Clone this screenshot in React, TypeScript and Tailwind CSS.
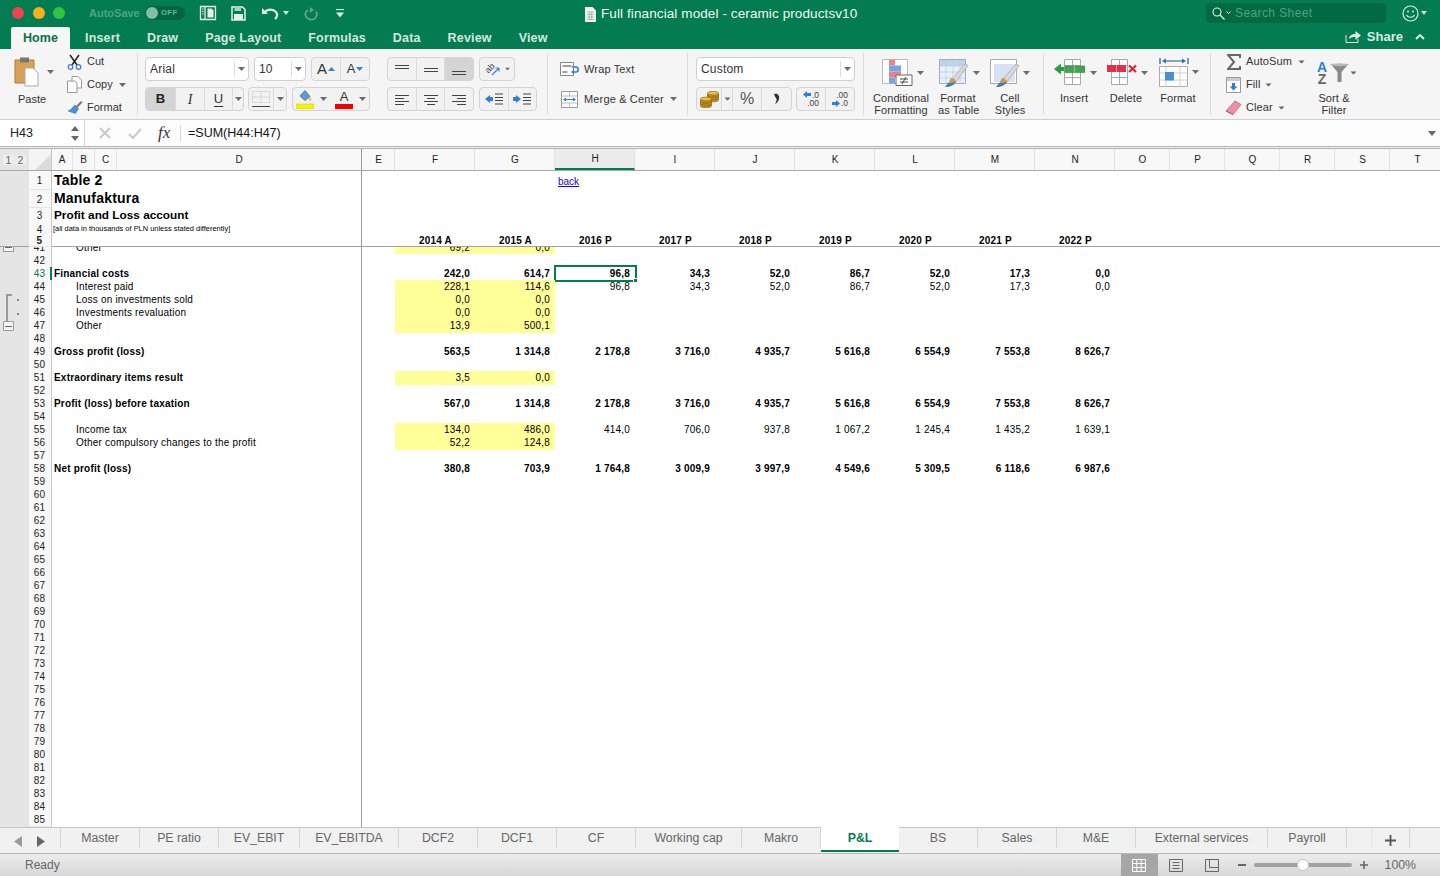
import React from 'react';

const UI = "font-['Liberation_Sans',Arial,sans-serif]";

const Caret = ({ className = '' }: { className?: string }) => (
  <svg width="7" height="4" viewBox="0 0 7 4" className={`shrink-0 ${className}`}>
    <path d="M0 0h7L3.500 4z" fill="#6b6b6b" />
  </svg>
);

const TitleTab = ({ label }: { label: string }) => (
  <div className="px-[13.5px] text-[12.5px] tracking-[0.16px] font-bold text-[#d5e8df] leading-[22px]">{label}</div>
);

const TitleBar = () => (
  <div className="h-[49px] bg-[#027c50] flex flex-col shrink-0">
    <div className="h-[26px] flex items-center relative">
      <div className="flex items-center pl-[12px] gap-[8.5px]">
        <div className="w-[12px] h-[12px] rounded-full bg-[#f0444a]" />
        <div className="w-[12px] h-[12px] rounded-full bg-[#f5b020]" />
        <div className="w-[12px] h-[12px] rounded-full bg-[#2fc645]" />
      </div>
      <div className="ml-[24px] text-[11px] font-bold text-[#4da584] w-[56px]">AutoSave</div>
      <div className="w-[40px] h-[14px] rounded-full bg-[#01653f] flex items-center pl-[1px]">
        <div className="w-[12px] h-[12px] rounded-full bg-[#7fbfa6]" />
        <span className="ml-[3px] text-[7.5px] font-bold text-[#6fb59a] tracking-[0.5px]">OFF</span>
      </div>
      <svg width="18" height="16" viewBox="0 0 18 16" className="ml-[14px]">
        <path d="M1.500 1.500h15v13h-15z M6 1.500v13" fill="none" stroke="#e4f1eb" strokeWidth="1.300" />
        <path d="M8.500 3.500h4l2 2v7h-6z" fill="#e4f1eb" />
        <path d="M3 4h1.500M3 6.500h1.500M3 9h1.500" stroke="#e4f1eb" />
      </svg>
      <svg width="15" height="15" viewBox="0 0 15 15" className="ml-[14px]">
        <path d="M1 1h10.500L14 3.500V14H1z" fill="none" stroke="#e4f1eb" strokeWidth="1.500" />
        <path d="M3.500 1.500h6.500v3.500H3.500z" fill="#a9d3c1" />
        <path d="M3 8h9v6H3z" fill="#e4f1eb" />
      </svg>
      <svg width="18" height="13" viewBox="0 0 18 13" className="ml-[15px]">
        <path d="M1 1v6h6z" fill="#e4f1eb" />
        <path d="M3 5.500C6 2 12 1.500 15 5c2 2.400 1 5.500-1 7" fill="none" stroke="#e4f1eb" strokeWidth="2.200" />
      </svg>
      <svg width="6" height="4" viewBox="0 0 6 4" className="ml-[4px]"><path d="M0 0h6L3 4z" fill="#d5e8df" /></svg>
      <svg width="14" height="15" viewBox="0 0 14 15" className="ml-[15px]">
        <path d="M6 1l4 3-4 3z" fill="#5aa98a" />
        <path d="M4 4C1.500 5.500 1 8 1.500 9.500 2.500 13 7 14.500 10 13c3-1.500 3.500-5 2-7.500" fill="none" stroke="#5aa98a" strokeWidth="1.800" />
      </svg>
      <svg width="10" height="9" viewBox="0 0 10 9" className="ml-[17px]">
        <path d="M1 0.500h8" stroke="#e4f1eb" strokeWidth="1.200" />
        <path d="M1 3.500h8L5 8.500z" fill="#e4f1eb" />
      </svg>
      <div className="absolute left-[585px] top-[4px] flex items-center">
        <svg width="11" height="15" viewBox="0 0 11 15">
          <path d="M0 0h7.500L11 3.500V15H0z" fill="#f2f7f4" />
          <path d="M2 5h7M2 7.500h7M2 10h7M2 12.500h7M4.300 5v8M6.700 5v8" stroke="#7fae96" strokeWidth="0.700" />
        </svg>
        <span className="ml-[5px] text-[13.5px] text-[#f2f7f4] font-normal tracking-[0.1px]">Full financial model - ceramic productsv10</span>
      </div>
      <div className="ml-auto w-[180px] h-[20px] rounded-[3px] bg-[#016a43] flex items-center pl-[6px]">
        <svg width="13" height="13" viewBox="0 0 13 13">
          <circle cx="5" cy="5" r="4" fill="none" stroke="#e4f1eb" strokeWidth="1.100" />
          <path d="M8 8l4.500 4.500" stroke="#e4f1eb" strokeWidth="1.200" />
        </svg>
        <svg width="5" height="4" viewBox="0 0 5 4" className="ml-[1px]"><path d="M.500.500l2 2 2-2" fill="none" stroke="#e4f1eb" /></svg>
        <span className="ml-[4px] text-[12px] text-[#4fa282] tracking-[0.4px]">Search Sheet</span>
      </div>
      <div className="ml-[16px] mr-[13px] flex items-center">
        <svg width="17" height="17" viewBox="0 0 17 17">
          <circle cx="8.500" cy="8.500" r="7.500" fill="none" stroke="#d8ebe2" strokeWidth="1.200" />
          <circle cx="6" cy="6.500" r="1" fill="#d8ebe2" />
          <circle cx="11" cy="6.500" r="1" fill="#d8ebe2" />
          <path d="M4.500 10c1.500 3 6.500 3 8 0" fill="none" stroke="#d8ebe2" strokeWidth="1.200" />
        </svg>
        <svg width="6" height="4" viewBox="0 0 6 4" className="ml-[2px]"><path d="M0 0h6L3 4z" fill="#d5e8df" /></svg>
      </div>
    </div>
    <div className="flex-1 flex items-end pl-[11px] pr-[15px]">
      <div className="w-[59px] h-[22px] bg-[#f6f6f6] rounded-t-[2px] text-center text-[12.5px] tracking-[0.1px] font-bold leading-[22px] text-[#0a7049]">Home</div>
      <div className="flex pl-[1.500px]">
        {['Insert', 'Draw', 'Page Layout', 'Formulas', 'Data', 'Review', 'View'].map(t => (
          <TitleTab key={t} label={t} />
        ))}
      </div>
      <div className="ml-auto flex items-center h-[22px] pb-[3px]">
        <svg width="16" height="13" viewBox="0 0 16 13">
          <path d="M1 5v7.500h12V9" fill="none" stroke="#d8ebe2" />
          <path d="M4 9c0-3.500 3-5 6.500-5V1L16 5.500 10.500 10V7C7.500 7 5.500 7.500 4 9z" fill="#d8ebe2" />
        </svg>
        <span className="ml-[6px] text-[13px] font-bold text-[#d8ebe2]">Share</span>
        <svg width="10" height="6" viewBox="0 0 10 6" className="ml-[12px]"><path d="M1 5l4-4 4 4" fill="none" stroke="#e4f1eb" strokeWidth="1.800" /></svg>
      </div>
    </div>
  </div>
);

const Sep = () => <div className="w-px h-[62px] bg-[#dcdcdc] self-center shrink-0" />;

const BtnGroup = ({ children, className = '' }: { children: React.ReactNode; className?: string }) => (
  <div className={`flex rounded-[4px] border border-[#d4d4d4] bg-[#f2f2f2] overflow-hidden ${className}`}>{children}</div>
);

const Cell = ({ children, className = '' }: { children?: React.ReactNode; className?: string }) => (
  <div className={`flex items-center justify-center border-r border-[#dadada] last:border-r-0 ${className}`}>{children}</div>
);

const Combo = ({ label, className = '' }: { label: string; className?: string }) => (
  <div className={`h-[24px] rounded-[4px] border border-[#d0d0d0] bg-white flex items-center pl-[4px] text-[12px] text-[#333] tracking-[0.2px] ${className}`}>
    <span className="flex-1">{label}</span>
    <div className="w-[14px] h-[16px] border-l border-[#dedede] flex items-center justify-center">
      <Caret />
    </div>
  </div>
);

const Lines = ({ d }: { d: string }) => (
  <svg width="18" height="13" viewBox="0 0 18 13"><path d={d} stroke="#444" strokeWidth="1" fill="none" /></svg>
);

const Clipboard = () => (
  <div className="w-[137px] shrink-0 flex">
    <div className="w-[67px] flex flex-col pt-[7px]">
      <div className="flex items-center pl-[14px]">
        <svg width="26" height="31" viewBox="0 0 26 31">
          <path d="M1 4h19v23H1z" fill="#d9a05a" stroke="#b27a36" />
          <path d="M6 1.500h9v5H6z" fill="#777" />
          <path d="M11 12h8l5 5v13H11z" fill="#fff" stroke="#aaa" />
        </svg>
        <Caret className="ml-[7px]" />
      </div>
      <div className="mt-[4px] w-[64px] text-center text-[11px] text-[#333]">Paste</div>
    </div>
    <div className="flex flex-col pt-[3px] gap-[4px] text-[11px] text-[#333]">
      <div className="flex items-center h-[19px]">
        <svg width="15" height="16" viewBox="0 0 15 16" className="mr-[5px]">
          <path d="M3 1l7 10M12 1L5 11" stroke="#222" strokeWidth="1.500" />
          <circle cx="3.500" cy="13" r="2.300" fill="none" stroke="#3a7fd0" strokeWidth="1.200" />
          <circle cx="11.500" cy="13" r="2.300" fill="none" stroke="#3a7fd0" strokeWidth="1.200" />
        </svg>
        Cut
      </div>
      <div className="flex items-center h-[19px]">
        <svg width="15" height="17" viewBox="0 0 15 17" className="mr-[5px]">
          <path d="M5 .500h6l3.500 3.500v8H5z" fill="#fff" stroke="#999" />
          <path d="M.500 5H8l2 2v9.500H.500z" fill="#fff" stroke="#999" />
        </svg>
        Copy
        <Caret className="ml-[6px]" />
      </div>
      <div className="flex items-center h-[19px]">
        <svg width="16" height="15" viewBox="0 0 16 15" className="mr-[4px]">
          <path d="M9 6l5-5 1.500 1.500-5 5z" fill="#777" />
          <path d="M8 5l3.500 3.500-3 5L1 11c2-1 4-2 4-3z" fill="#4a90d9" stroke="#31659c" strokeWidth=".5" />
        </svg>
        Format
      </div>
    </div>
  </div>
);

const Font = () => (
  <div className="w-[249px] shrink-0 pl-[7px] pt-[8px] flex flex-col gap-[6px]">
    <div className="flex gap-[5px]">
      <Combo label="Arial" className="w-[104px]" />
      <Combo label="10" className="w-[52px]" />
      <BtnGroup className="w-[59px] h-[24px]">
        <Cell className="flex-1 text-[15px] text-[#333] gap-[1px]">A<svg width="7" height="4" viewBox="0 0 7 4"><path d="M0 4h7L3.500 0z" fill="#3a7fd0" /></svg></Cell>
        <Cell className="flex-1 text-[13px] text-[#333] gap-[1px]">A<svg width="7" height="4" viewBox="0 0 7 4"><path d="M0 0h7L3.500 4z" fill="#3a7fd0" /></svg></Cell>
      </BtnGroup>
    </div>
    <div className="flex items-stretch h-[24px]">
      <BtnGroup className="w-[99px]">
        <Cell className="w-[30px] bg-[#d4d4d4] font-bold text-[13px] text-[#222]">B</Cell>
        <Cell className="w-[29px] italic text-[14px] text-[#333] font-['Liberation_Serif',serif]">I</Cell>
        <Cell className="w-[28px] text-[13px] text-[#333]"><span className="border-b border-[#333] leading-[14px]">U</span></Cell>
        <Cell className="flex-1"><Caret /></Cell>
      </BtnGroup>
      <BtnGroup className="w-[39px] ml-[4px]">
        <Cell className="flex-1">
          <svg width="18" height="17" viewBox="0 0 18 17">
            <path d="M.500.500h17v11H.500zM9 .500v11M.500 6h17" fill="none" stroke="#c2c2c2" strokeDasharray="1 1" />
            <path d="M0 15.500h18" stroke="#444" strokeWidth="1" />
          </svg>
        </Cell>
        <Cell className="w-[12px]"><Caret /></Cell>
      </BtnGroup>
      <BtnGroup className="w-[78px] ml-[5px]">
        <Cell className="w-[38px] border-r-0 justify-start pl-[3px]">
          <svg width="18" height="20" viewBox="0 0 18 20" className="shrink-0">
            <path d="M4 7l5-5.500 5 6-5 4z" fill="#5f9bd8" stroke="#555" strokeWidth=".7" />
            <path d="M14 8l1.500 3-1.500 1-1-2z" fill="#e0b040" />
            <path d="M0 15h18v5H0z" fill="#f7f200" stroke="#c9c400" strokeWidth=".5" />
          </svg>
          <Caret className="ml-[6px]" />
        </Cell>
        <Cell className="flex-1 border-r-0 justify-start pl-[4px]">
          <div className="flex flex-col items-center shrink-0">
            <span className="text-[13px] leading-[14px] text-[#333]">A</span>
            <div className="w-[18px] h-[5px] bg-[#f30000]" />
          </div>
          <Caret className="ml-[6px]" />
        </Cell>
      </BtnGroup>
    </div>
  </div>
);

const Align = () => (
  <div className="w-[160px] shrink-0 pt-[8px] flex flex-col gap-[6px]">
    <div className="flex h-[24px]">
      <BtnGroup className="w-[87px]">
        <Cell className="flex-1"><Lines d="M2 2.500h14M2 5.500h14" /></Cell>
        <Cell className="flex-1"><Lines d="M2 5.500h14M2 8.500h14" /></Cell>
        <Cell className="flex-1 bg-[#d4d4d4]"><Lines d="M2 8.500h14M2 11.500h14" /></Cell>
      </BtnGroup>
      <BtnGroup className="w-[36px] ml-[5px]">
        <Cell className="flex-1 gap-[3px]">
          <div className="relative w-[17px] h-[15px] flex items-center justify-center">
            <span className="-rotate-45 text-[9px] leading-[9px] text-[#444] -translate-x-[2px] -translate-y-[1px]">ab</span>
            <svg width="17" height="15" viewBox="0 0 17 15" className="absolute inset-0">
              <path d="M8 13l7-7M15 6h-3.500M15 6v3.500" fill="none" stroke="#3a7fd0" strokeWidth="1.200" />
            </svg>
          </div>
          <Caret className="scale-75" />
        </Cell>
      </BtnGroup>
    </div>
    <div className="flex h-[24px]">
      <BtnGroup className="w-[87px]">
        <Cell className="flex-1"><Lines d="M2 2.500h14M2 5.500h9M2 8.500h14M2 11.500h9" /></Cell>
        <Cell className="flex-1"><Lines d="M2 2.500h14M5 5.500h8M2 8.500h14M5 11.500h8" /></Cell>
        <Cell className="flex-1"><Lines d="M2 2.500h14M7 5.500h9M2 8.500h14M7 11.500h9" /></Cell>
      </BtnGroup>
      <BtnGroup className="w-[58px] ml-[5px]">
        <Cell className="flex-1">
          <svg width="18" height="12" viewBox="0 0 18 12">
            <path d="M0 6l5-4v2h3v4H5v2z" fill="#2f7fd8" />
            <path d="M10 1h8M10 4.500h8M10 7.500h8M10 11h8" stroke="#444" />
          </svg>
        </Cell>
        <Cell className="flex-1">
          <svg width="18" height="12" viewBox="0 0 18 12">
            <path d="M8 6L3 2v2H0v4h3v2z" fill="#2f7fd8" />
            <path d="M10 1h8M10 4.500h8M10 7.500h8M10 11h8" stroke="#444" />
          </svg>
        </Cell>
      </BtnGroup>
    </div>
  </div>
);

const Wrap = () => (
  <div className="w-[139px] shrink-0 flex flex-col pl-[12px] pt-[10px] gap-[10px] text-[11px] text-[#333] tracking-[0.15px]">
    <div className="flex items-center h-[20px]">
      <svg width="20" height="14" viewBox="0 0 20 14" className="mr-[4px]">
        <path d="M.500.500h13v13H.500z" fill="#fff" stroke="#888" />
        <path d="M2.500 4h9M2.500 10h5" stroke="#444" />
        <path d="M12 5h4c3 0 3 5 0 5h-3" fill="none" stroke="#2f7fd8" strokeWidth="1.500" />
        <path d="M11 10l3-2.500v5z" fill="#2f7fd8" />
      </svg>
      Wrap Text
    </div>
    <div className="flex items-center h-[20px]">
      <svg width="18" height="17" viewBox="0 0 18 17" className="ml-px mr-[5px]">
        <path d="M.500.500h16v16H.500z" fill="#fff" stroke="#999" />
        <path d="M.500 5h16M.500 12h16M8.500 .500V5M8.500 12v5" stroke="#bbb" />
        <path d="M3 8.500h11" stroke="#2f7fd8" />
        <path d="M2 8.500l3-2v4zM15 8.500l-3-2v4z" fill="#2f7fd8" />
      </svg>
      Merge &amp; Center
      <Caret className="ml-[6px]" />
    </div>
  </div>
);

const coin = (cx: number, cy: number) => (
  <g key={`${cx}-${cy}`}>
    <path d={`M${cx - 5.500} ${cy}v2c0 2.400 11 2.400 11 0v-2z`} fill="#c98f1d" stroke="#7d5a12" strokeWidth=".6" />
    <ellipse cx={cx} cy={cy} rx="5.500" ry="1.900" fill="#edbd44" stroke="#7d5a12" strokeWidth=".6" />
  </g>
);

const NumberGroup = () => (
  <div className="w-[175px] shrink-0 pl-[8px] pt-[8px] flex flex-col gap-[6px]">
    <Combo label="Custom" className="w-[159px]" />
    <div className="flex h-[24px]">
      <BtnGroup className="w-[96px]">
        <Cell className="w-[25px]">
          <svg width="19" height="17" viewBox="0 0 19 17">
            {coin(13, 7)}
            {coin(13, 4.500)}
            {coin(13, 2.200)}
            {coin(6, 13)}
            {coin(6, 10.500)}
            {coin(6, 8)}
          </svg>
        </Cell>
        <Cell className="w-[11px]"><Caret className="scale-90" /></Cell>
        <Cell className="w-[29px] text-[16px] text-[#555]">%</Cell>
        <Cell className="flex-1">
          <svg width="8" height="12" viewBox="0 0 8 12"><path d="M1 1c3-1 6 1 5 5-.5 2.500-2 4-4 5 1-2 2-3.500 1.500-5C3 5 1.500 3 1 1z" fill="#333" /></svg>
        </Cell>
      </BtnGroup>
      <BtnGroup className="w-[59px] ml-[4px]">
        <Cell className="flex-1 text-[8.500px] leading-[8.500px] text-[#444]">
          <div className="flex flex-col items-end">
            <div className="flex items-center">
              <svg width="8" height="7" viewBox="0 0 8 7" className="mr-px"><path d="M0 3.500L4 0v2h4v3H4v2z" fill="#2f7fd8" /></svg>
              .0
            </div>
            <span>.00</span>
          </div>
        </Cell>
        <Cell className="flex-1 text-[8.500px] leading-[8.500px] text-[#444]">
          <div className="flex flex-col items-end">
            <span>.00</span>
            <div className="flex items-center">
              <svg width="8" height="7" viewBox="0 0 8 7" className="mr-px"><path d="M8 3.500L4 0v2H0v3h4v2z" fill="#2f7fd8" /></svg>
              .0
            </div>
          </div>
        </Cell>
      </BtnGroup>
    </div>
  </div>
);

const BigLabel = ({ lines, className = '' }: { lines: string[]; className?: string }) => (
  <div className={`text-center text-[11px] leading-[12px] text-[#333] tracking-[0.1px] whitespace-nowrap mt-[5px] ${className}`}>
    {lines.map(l => <div key={l}>{l}</div>)}
  </div>
);

const BrushOverlay = () => (
  <>
    <path d="M13 20L26 5l3 1.500L17 23z" fill="#d8d8d8" stroke="#999" strokeWidth=".6" />
    <path d="M12 19c3 0 5 2 5 4-2 4-7 5-11 5 3-2 4-6 6-9z" fill="#d69a45" />
    <path d="M9 24c3 0 6-.5 8-1-2 3.500-7 5-11 5 1-1 2-2.500 3-4z" fill="#2f7fd8" />
  </>
);

const Styles = () => (
  <div className="w-[179px] shrink-0 flex">
    <div className="w-[74px] shrink-0 flex flex-col pt-[9px]">
      <div className="flex items-center h-[29px] pl-[18px]">
        <svg width="31" height="27" viewBox="0 0 31 27">
          <path d="M.500.500h25v24H.500z" fill="#fff" stroke="#bbb" />
          <path d="M7 .500h6v6H7z" fill="#f0808a" />
          <path d="M7 6.500h12v6H7z" fill="#6fa8e8" />
          <path d="M7 12.500h12v6H7z" fill="#f0808a" />
          <path d="M7 18.500h6v6H7z" fill="#6fa8e8" />
          <path d="M14 16h16v10.500H14z" fill="#fff" stroke="#666" />
          <path d="M18 20h8M18 23h8M24 18l-4 7" stroke="#444" />
        </svg>
        <Caret className="ml-[4px]" />
      </div>
      <BigLabel lines={['Conditional', 'Formatting']} />
    </div>
    <div className="w-[40px] shrink-0 flex flex-col pt-[9px]">
      <div className="flex items-center h-[29px] pl-px w-max">
        <svg width="30" height="28" viewBox="0 0 30 28">
          <path d="M.500.500h26v24H.500z" fill="#fff" stroke="#aaa" />
          <path d="M1 1h25v6H1z" fill="#bcd4ee" />
          <path d="M1 7h25v17H1z" fill="#e6f0fa" />
          <path d="M.500 7h26M.500 13h26M.500 19h26M7 1v24M14 1v24M21 1v24" stroke="#b9cbdd" strokeWidth=".7" />
          <BrushOverlay />
        </svg>
        <Caret className="ml-[4px]" />
      </div>
      <BigLabel lines={['Format', 'as Table']} />
    </div>
    <div className="w-[64px] shrink-0 flex flex-col pt-[9px]">
      <div className="flex items-center h-[29px] pl-[12px]">
        <svg width="30" height="28" viewBox="0 0 30 28">
          <path d="M.500.500h26v24H.500z" fill="#fff" stroke="#aaa" />
          <path d="M4 5h21v18H4z" fill="#d5e3f4" />
          <BrushOverlay />
        </svg>
        <Caret className="ml-[3px]" />
      </div>
      <BigLabel lines={['Cell', 'Styles']} />
    </div>
  </div>
);

const CellsGroup = () => (
  <div className="w-[166px] shrink-0 flex">
    <div className="w-[60px] shrink-0 flex flex-col pt-[9px]">
      <div className="flex items-center h-[29px] pl-[10px]">
        <svg width="31" height="27" viewBox="0 0 31 27">
          <path d="M10.500 .500h16v25h-16zM10.500 6.500h16M10.500 18.500h16M18.500 .500v25" fill="#fff" stroke="#aaa" />
          <path d="M11 7h20v6.500H11z" fill="#44a551" stroke="#2f8a3d" strokeWidth=".6" />
          <path d="M20.500 7v6.500" stroke="#86c78f" />
          <path d="M0 10l7-5.500v11z" fill="#2f9a43" />
          <path d="M6 8h4v4H6z" fill="#2f9a43" />
        </svg>
        <Caret className="ml-[5px]" />
      </div>
      <BigLabel lines={['Insert']} />
    </div>
    <div className="w-[44px] shrink-0 flex flex-col pt-[9px]">
      <div className="flex items-center h-[29px] pl-[3px] w-max">
        <svg width="31" height="27" viewBox="0 0 31 27">
          <path d="M4.500 .500h16v25h-16zM4.500 6.500h16M4.500 18.500h16M12.500 .500v25" fill="#fff" stroke="#aaa" />
          <path d="M0 6h19v7H0z" fill="#e0304a" />
          <path d="M9.500 6v7" stroke="#f08a98" />
          <path d="M22 6.500l7 6.500M29 6.500l-7 6.500" stroke="#dd2030" strokeWidth="2.200" />
        </svg>
        <Caret className="ml-[3px]" />
      </div>
      <BigLabel lines={['Delete']} />
    </div>
    <div className="w-[60px] shrink-0 flex flex-col pt-[8px]">
      <div className="flex items-center h-[30px] pl-[11px]">
        <svg width="30" height="30" viewBox="0 0 30 30">
          <path d="M1 1v6M29 1v6" stroke="#2f6fc0" strokeWidth="1.400" />
          <path d="M6 4h18" stroke="#2f6fc0" strokeWidth="1.200" />
          <path d="M3 4l4-2.500v5zM27 4l-4-2.500v5z" fill="#2f6fc0" />
          <path d="M.500 9.500h28v20H.500z" fill="#fff" stroke="#aaa" />
          <path d="M.500 16h28M.500 23h28M7 9.500v20M21 9.500v20" stroke="#d0d0d0" />
          <path d="M6 15h9v8.500H6z" fill="#4a8ed8" />
        </svg>
        <Caret className="ml-[3px]" />
      </div>
      <BigLabel lines={['Format']} />
    </div>
  </div>
);

const Editing = () => (
  <div className="flex-1 flex pl-[15px] text-[11px] text-[#333] tracking-[0.1px]">
    <div className="w-[89px] flex flex-col pt-[4px] gap-[6px]">
      <div className="flex items-center h-[17px]">
        <svg width="14" height="16" viewBox="0 0 14 16" className="ml-[1px] mr-[5px]"><path d="M13 4V1H1l6 7-6 7h12v-3" fill="none" stroke="#666" strokeWidth="2" /></svg>
        AutoSum
        <Caret className="ml-[6px] scale-90" />
      </div>
      <div className="flex items-center h-[17px]">
        <svg width="15" height="16" viewBox="0 0 15 16" className="mr-[5px]">
          <path d="M.500.500h14v15H.500z" fill="#fff" stroke="#999" />
          <path d="M1 1h13v3H1z" fill="#ccc" />
          <path d="M6 6h3v3.500h2.500l-4 4-4-4H6z" fill="#2f7fd8" />
        </svg>
        Fill
        <Caret className="ml-[5px] scale-90" />
      </div>
      <div className="flex items-center h-[17px]">
        <svg width="17" height="16" viewBox="0 0 17 16" className="-ml-px mr-[4px]">
          <path d="M10 1l6 3.500-8 10L1 11z" fill="#f08da5" stroke="#c0516e" strokeWidth=".7" />
          <path d="M1 11l7 3.500" stroke="#c0516e" />
        </svg>
        Clear
        <Caret className="ml-[5px] scale-90" />
      </div>
    </div>
    <div className="flex flex-col items-center pt-[9px]">
      <div className="flex items-center h-[29px]">
        <div className="flex flex-col items-center font-bold text-[14px] leading-[12px] w-[14px]">
          <span className="text-[#2f7fd8]">A</span>
          <span className="text-[#666]">Z</span>
        </div>
        <svg width="19" height="20" viewBox="0 0 19 20" className="ml-px">
          <path d="M.500 1h18l-7 8v10h-4V9z" fill="#8a8a8a" />
          <ellipse cx="9.500" cy="1.800" rx="9" ry="1.500" fill="#bbb" />
        </svg>
        <Caret className="ml-[1px] scale-90" />
      </div>
      <BigLabel lines={['Sort &', 'Filter']} className="-ml-[4px]" />
    </div>
  </div>
);

const Ribbon = () => (
  <div className={`h-[71px] bg-[#f5f5f5] border-b border-[#cfcfcf] flex shrink-0 ${UI}`}>
    <Clipboard />
    <Sep />
    <Font />
    <Align />
    <Sep />
    <Wrap />
    <Sep />
    <NumberGroup />
    <Sep />
    <Styles />
    <Sep />
    <CellsGroup />
    <Sep />
    <Editing />
  </div>
);

const FormulaBar = () => (
  <div className={`h-[29px] shrink-0 flex flex-col ${UI}`}>
    <div className="h-[26px] bg-[#fdfdfd] flex items-center">
      <div className="w-[85px] h-full bg-white border-r border-[#d8d8d8] flex items-center pl-[10px] text-[12.500px] text-[#222]">
        <span className="flex-1">H43</span>
        <svg width="8" height="17" viewBox="0 0 8 17" className="mr-[5px]">
          <path d="M0 6l4-5 4 5zM0 11l4 5 4-5z" fill="#666" />
        </svg>
      </div>
      <svg width="12" height="12" viewBox="0 0 12 12" className="ml-[14px]"><path d="M1 1l10 10M11 1L1 11" stroke="#c9c9c9" strokeWidth="2" /></svg>
      <svg width="14" height="11" viewBox="0 0 14 11" className="ml-[17px]"><path d="M1 6l4 4 8-9" fill="none" stroke="#c9c9c9" strokeWidth="2" /></svg>
      <span className="ml-[16px] w-[22px] text-[17px] italic text-[#333] font-['Liberation_Serif',serif]">fx</span>
      <div className="w-px h-[17px] bg-[#d8d8d8]" />
      <span className="ml-[7px] text-[12.500px] text-[#111]">=SUM(H44:H47)</span>
      <svg width="8" height="5" viewBox="0 0 8 5" className="ml-auto mr-[4px]"><path d="M0 0h8L4 5z" fill="#666" /></svg>
    </div>
    <div className="h-[1px] bg-[#b5b5b5]" />
    <div className="h-[1px] bg-[#f0f0f0]" />
    <div className="h-[1px] bg-[#b5b5b5]" />
  </div>
);

const GRID = 'grid grid-cols-[23px_310px_33px_repeat(9,80px)_repeat(6,55px)]';

const ColHead = ({ label, active }: { label: string; active?: boolean }) => (
  <div className={`flex items-center justify-center pl-px text-[10px] text-[#222] border-r border-[#e2e2e2] ${active ? 'bg-[#ececec] border-b-2 border-b-[#027c50]' : ''}`}>
    {label}
  </div>
);

const ColumnHeader = () => (
  <div className="h-[22px] flex bg-[#f8f8f8] border-b border-[#a8a8a8]">
    <div className="w-[29px] bg-[#e5e5e5] flex items-start pt-[6px] pl-[3px] gap-px shrink-0">
      <div className="w-[11px] h-[10px] bg-[#eeeeee] text-center text-[10.500px] leading-[10px] text-[#666]">1</div>
      <div className="w-[11px] h-[10px] bg-[#eeeeee] text-center text-[10.500px] leading-[10px] text-[#666]">2</div>
    </div>
    <div className={GRID}>
      <div className="flex items-end justify-end border-r border-[#c8c8c8] bg-[#f4f4f4]">
        <svg width="16" height="16" viewBox="0 0 16 16"><path d="M16 0v16H0z" fill="#dcdcdc" /></svg>
      </div>
      <div className="flex border-r border-[#999]">
        <div className="w-[21px] flex items-center justify-center text-[10px] text-[#222] border-r border-[#e2e2e2]">A</div>
        <div className="w-[22px] flex items-center justify-center text-[10px] text-[#222] border-r border-[#e2e2e2]">B</div>
        <div className="w-[22px] flex items-center justify-center text-[10px] text-[#222] border-r border-[#e2e2e2]">C</div>
        <div className="flex-1 flex items-center justify-center text-[10px] text-[#222]">D</div>
      </div>
      {['E', 'F', 'G', 'H', 'I', 'J', 'K', 'L', 'M', 'N', 'O', 'P', 'Q', 'R', 'S', 'T'].map(c => (
        <ColHead key={c} label={c} active={c === 'H'} />
      ))}
    </div>
  </div>
);

const RowNum = ({ n, active, nudge = '' }: { n: number; active?: boolean; nudge?: string }) => (
  <div className={`relative flex items-center justify-center pr-px text-[10px] bg-[#f8f8f8] border-r border-[#c8c8c8] border-b border-b-[#e6e6e6] ${active ? 'text-[#027c50]' : 'text-[#222]'} ${nudge}`}>
    {n}
    {active && <div className="absolute right-[-1px] top-0 bottom-0 w-[2px] bg-[#027c50]" />}
  </div>
);

type RowData = { n: number; label?: string; bold?: boolean; plainVals?: boolean; indent?: boolean; vals?: string[]; yellow?: boolean };

const data: RowData[] = [
  { n: 42 },
  { n: 43, label: 'Financial costs', bold: true, vals: ['242,0', '614,7', '96,8', '34,3', '52,0', '86,7', '52,0', '17,3', '0,0'] },
  { n: 44, label: 'Interest paid', indent: true, yellow: true, vals: ['228,1', '114,6', '96,8', '34,3', '52,0', '86,7', '52,0', '17,3', '0,0'] },
  { n: 45, label: 'Loss on investments sold', indent: true, yellow: true, vals: ['0,0', '0,0'] },
  { n: 46, label: 'Investments revaluation', indent: true, yellow: true, vals: ['0,0', '0,0'] },
  { n: 47, label: 'Other', indent: true, yellow: true, vals: ['13,9', '500,1'] },
  { n: 48 },
  { n: 49, label: 'Gross profit (loss)', bold: true, vals: ['563,5', '1 314,8', '2 178,8', '3 716,0', '4 935,7', '5 616,8', '6 554,9', '7 553,8', '8 626,7'] },
  { n: 50 },
  { n: 51, label: 'Extraordinary items result', bold: true, plainVals: true, yellow: true, vals: ['3,5', '0,0'] },
  { n: 52 },
  { n: 53, label: 'Profit (loss) before taxation', bold: true, vals: ['567,0', '1 314,8', '2 178,8', '3 716,0', '4 935,7', '5 616,8', '6 554,9', '7 553,8', '8 626,7'] },
  { n: 54 },
  { n: 55, label: 'Income tax', indent: true, yellow: true, vals: ['134,0', '486,0', '414,0', '706,0', '937,8', '1 067,2', '1 245,4', '1 435,2', '1 639,1'] },
  { n: 56, label: 'Other compulsory changes to the profit', indent: true, yellow: true, vals: ['52,2', '124,8'] },
  { n: 57 },
  { n: 58, label: 'Net profit (loss)', bold: true, vals: ['380,8', '703,9', '1 764,8', '3 009,9', '3 997,9', '4 549,6', '5 309,5', '6 118,6', '6 987,6'] },
];
for (let n = 59; n <= 85; n++) data.push({ n });

const SheetRow = ({ row }: { row: RowData }) => {
  const weight = row.bold ? 'font-bold' : '';
  const valWeight = row.bold && !row.plainVals ? 'font-bold' : '';
  return (
    <div className={`${GRID} h-[13px] text-[10px] leading-[13px] text-black tracking-[0.2px]`}>
      <RowNum n={row.n} active={row.n === 43} />
      <div className={`border-r border-[#999] whitespace-nowrap ${row.indent ? 'pl-[24px]' : 'pl-[2px]'} ${weight}`}>{row.label}</div>
      <div />
      {Array.from({ length: 9 }).map((_, i) => {
        const yellow = row.yellow && i < 2;
        const selected = row.n === 43 && i === 2;
        return (
          <div key={i} className={`relative text-right pr-[5px] ${valWeight} ${yellow ? 'bg-[#ffff99]' : ''}`}>
            {row.vals?.[i]}
            {selected && (
              <div className="absolute left-[-1px] top-[-2px] right-[-2px] bottom-[-1px] border-2 border-[#027c50]">
                <div className="absolute right-[-3px] bottom-[-3px] w-[5px] h-[5px] bg-[#027c50] border border-white" />
              </div>
            )}
          </div>
        );
      })}
    </div>
  );
};

const FrozenRow = ({ n, h, nudge, children }: { n: number; h: string; nudge?: string; children?: React.ReactNode }) => (
  <div className={`${GRID} ${h}`}>
    <RowNum n={n} nudge={nudge} />
    <div className="border-r border-[#999] whitespace-nowrap pl-[2px] text-black">{children}</div>
  </div>
);

const Sheet = () => (
  <div className="h-[678px] flex flex-col overflow-hidden shrink-0 font-['Liberation_Sans',Arial,sans-serif]">
    <ColumnHeader />
    <div className="flex-1 flex min-h-0">
      <div className="w-[29px] shrink-0 bg-[#e5e5e5] flex flex-col">
        <div className="h-[75px]" />
        <div className="h-px bg-[#a0a0a0] w-full" />
        <div className="h-[5px] ml-[3px] w-[11px] border border-t-0 border-[#999] rounded-b-[1px] bg-[#f4f4f4] flex items-start justify-center overflow-hidden">
          <div className="w-[7px] h-px bg-[#666]" />
        </div>
        <div className="h-[42px]" />
        <div className="flex">
          <div className="ml-[6px] w-[6px] h-[27px] border-l-2 border-t-2 border-[#9a9a9a]" />
          <div className="ml-[5px] flex flex-col pt-[5px] gap-[12px]">
            <div className="w-[2px] h-[2px] bg-[#888]" />
            <div className="w-[2px] h-[2px] bg-[#888]" />
          </div>
        </div>
        <div className="ml-[3px] w-[11px] h-[10px] border border-[#999] rounded-[1px] bg-[#f4f4f4] flex items-center justify-center">
          <div className="w-[7px] h-px bg-[#666]" />
        </div>
      </div>
      <div className="flex-1 min-w-0 flex flex-col overflow-hidden">
        <div className="h-[75px] shrink-0">
          <div className="relative">
            <FrozenRow n={1} h="h-[19px]" nudge="pt-px"><div className="text-[14px] font-bold leading-[19px] tracking-[0.2px]">Table 2</div></FrozenRow>
            <FrozenRow n={2} h="h-[18px]" nudge="pt-px"><div className="text-[14px] font-bold leading-[17px] tracking-[0.2px]">Manufaktura</div></FrozenRow>
            <FrozenRow n={3} h="h-[14px]"><div className="text-[11.800px] font-bold leading-[14px]">Profit and Loss account</div></FrozenRow>
            <FrozenRow n={4} h="h-[13px]" nudge="pb-px"><div className="text-[7.450px] leading-[13px] -ml-[1px]">[all data in thousands of PLN unless stated differently]</div></FrozenRow>
            <div className={`${GRID} h-[11px] text-[10px] leading-[11px] font-bold text-black tracking-[0.2px]`}>
              <RowNum n={5} />
              <div className="border-r border-[#999]" />
              <div />
              {['2014 A', '2015 A', '2016 P', '2017 P', '2018 P', '2019 P', '2020 P', '2021 P', '2022 P'].map(y => (
                <div key={y} className="text-center pl-px">{y}</div>
              ))}
            </div>
            <a className="absolute left-[529px] top-[4px] text-[10px] leading-[13px] text-[#1a00ee] underline" href="#back">back</a>
          </div>
        </div>
        <div className="h-px shrink-0 bg-[#a0a0a0]" />
        <div className="h-[7px] shrink-0 overflow-hidden">
          <div className="-mt-[6px]">
            <SheetRow row={{ n: 41, label: 'Other', indent: true, yellow: true, vals: ['69,2', '0,0'] }} />
          </div>
        </div>
        {data.map(r => <SheetRow key={r.n} row={r} />)}
        <div className={`${GRID} flex-1 min-h-0`}>
          <div className="bg-[#f8f8f8] border-r border-[#c8c8c8]" />
          <div className="border-r border-[#999]" />
        </div>
      </div>
    </div>
  </div>
);

type Tab = { name: string; w: string };
const tabs: Tab[] = [
  { name: 'Master', w: 'w-[79px]' },
  { name: 'PE ratio', w: 'w-[79px]' },
  { name: 'EV_EBIT', w: 'w-[81px]' },
  { name: 'EV_EBITDA', w: 'w-[99px]' },
  { name: 'DCF2', w: 'w-[79px]' },
  { name: 'DCF1', w: 'w-[79px]' },
  { name: 'CF', w: 'w-[79px]' },
  { name: 'Working cap', w: 'w-[106px]' },
  { name: 'Makro', w: 'w-[79px]' },
  { name: 'P&L', w: 'w-[78px]' },
  { name: 'BS', w: 'w-[79px]' },
  { name: 'Sales', w: 'w-[79px]' },
  { name: 'M&E', w: 'w-[79px]' },
  { name: 'External services', w: 'w-[132px]' },
  { name: 'Payroll', w: 'w-[79px]' },
];

const SheetTabs = () => (
  <div className={`h-[26px] shrink-0 bg-[#f1f1f1] border-t border-[#c4c4c4] flex ${UI}`}>
    <div className="w-[60px] flex items-center pl-[14px] gap-[15px] pt-[2px]">
      <svg width="8" height="11" viewBox="0 0 8 11"><path d="M8 0v11L0 5.500z" fill="#9a9a9a" /></svg>
      <svg width="8" height="11" viewBox="0 0 8 11"><path d="M0 0v11l8-5.500z" fill="#666" /></svg>
    </div>
    <div className="w-px h-[20px] bg-[#d6d6d6]" />
    {tabs.map(t => t.name === 'P&L' ? (
      <div key={t.name} className={`${t.w} -mt-px h-[25px] bg-white border-b-2 border-[#027c50] text-center text-[12.300px] font-bold leading-[23px] text-[#027c50]`}>{t.name}</div>
    ) : (
      <div key={t.name} className={`${t.w} h-[20px] border-r border-[#d6d6d6] text-center text-[12.300px] leading-[20px] text-[#666] shrink-0`}>{t.name}</div>
    ))}
    <div className="w-[25px] h-[20px] border-r border-[#e4e4e4]" />
    <div className="w-[38px] h-[20px] border-r border-[#d6d6d6] flex items-center justify-center pt-[4px]">
      <svg width="11" height="11" viewBox="0 0 11 11"><path d="M5.500 0v11M0 5.500h11" stroke="#555" strokeWidth="1.800" /></svg>
    </div>
  </div>
);

const StatusBar = () => (
  <div className={`flex-1 bg-gradient-to-b from-[#ededed] to-[#d6d6d6] border-t border-[#b8b8b8] flex items-center ${UI}`}>
    <span className="ml-[25px] text-[12px] text-[#666]">Ready</span>
    <div className="ml-auto h-full w-[37px] bg-[#a6a6a6] flex items-center justify-center">
      <svg width="14" height="13" viewBox="0 0 14 13"><path d="M.500.500h13v12H.500zM.500 4.500h13M.500 8.500h13M4.800.500v12M9.200.500v12" fill="none" stroke="#fff" /></svg>
    </div>
    <div className="w-[36px] flex justify-center">
      <svg width="14" height="13" viewBox="0 0 14 13"><path d="M.500.500h13v12H.500z" fill="none" stroke="#666" /><path d="M3.500 3.500h7M3.500 6.500h7M3.500 9.500h7" stroke="#666" /></svg>
    </div>
    <div className="w-[36px] flex justify-center">
      <svg width="14" height="13" viewBox="0 0 14 13"><path d="M.500.500h13v12H.500zM4.500 .500v8h9" fill="none" stroke="#666" /></svg>
    </div>
    <div className="w-[8px] h-[2px] bg-[#666] ml-[8px]" />
    <div className="ml-[8px] w-[98px] h-[4px] rounded-full bg-[#a2a2a2] relative">
      <div className="absolute left-[43px] top-[-4px] w-[12px] h-[12px] rounded-full bg-white border border-[#c4c4c4]" />
    </div>
    <svg width="8" height="8" viewBox="0 0 8 8" className="ml-[8px]"><path d="M4 0v8M0 4h8" stroke="#666" strokeWidth="1.600" /></svg>
    <span className="ml-[17px] mr-[24px] text-[12.300px] text-[#666]">100%</span>
  </div>
);

export default function App() {
  return (
    <div className={`w-[1440px] h-[876px] overflow-hidden flex flex-col bg-white ${UI}`}>
      <TitleBar />
      <Ribbon />
      <FormulaBar />
      <Sheet />
      <SheetTabs />
      <StatusBar />
    </div>
  );
}
